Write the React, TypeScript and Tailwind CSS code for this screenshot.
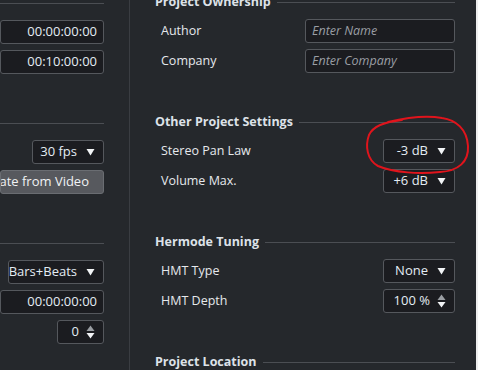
import React from "react";

const font = { fontFamily: '"Open Sans", "Noto Sans", sans-serif' };

function Caret() {
  return (
    <svg width="9" height="8" viewBox="0 0 9 8" className="shrink-0">
      <path d="M0.5 1 H8.5 L4.5 7.5 Z" fill="#f2f4f6" />
    </svg>
  );
}

function Spin() {
  return (
    <svg width="9" height="14" viewBox="0 0 9 14" className="shrink-0">
      <path d="M0.5 6 H8.5 L4.5 0.5 Z" fill="#9a9ea3" />
      <path d="M0.5 8 H8.5 L4.5 13.5 Z" fill="#f2f4f6" />
    </svg>
  );
}

function Field({ value, w }: { value: string; w: string }) {
  return (
    <div
      className={`${w} h-[24px] rounded-[3px] border border-[#55585d] bg-[#1b1c20] flex items-center justify-end pr-[6px] text-[13px] text-[#e4ecf4]`}
    >
      {value}
    </div>
  );
}

function Select({ value, w }: { value: string; w: string }) {
  return (
    <div
      className={`${w} h-[24px] rounded-[3px] border border-[#55585d] bg-[#1b1c20] flex items-center justify-end gap-[9px] pr-[8px] text-[13px] text-[#e4ecf4]`}
    >
      <span>{value}</span>
      <Caret />
    </div>
  );
}

function Spinner({ value, w }: { value: string; w: string }) {
  return (
    <div
      className={`${w} h-[24px] rounded-[3px] border border-[#55585d] bg-[#1b1c20] flex items-center justify-end gap-[7px] pr-[8px] text-[13px] text-[#e4ecf4]`}
    >
      <span>{value}</span>
      <Spin />
    </div>
  );
}

function TextInput({ placeholder }: { placeholder: string }) {
  return (
    <div className="w-[150px] h-[24px] rounded-[3px] border border-[#55585d] bg-[#1b1c20] flex items-center pl-[6px] text-[12.5px] italic text-[#9a9ea4]">
      {placeholder}
    </div>
  );
}

function Heading({ title }: { title?: string }) {
  return (
    <div className="h-[20px] flex items-center gap-[6px]">
      {title && (
        <span className="text-[12.5px] font-bold text-[#dde2e8] whitespace-nowrap">
          {title}
        </span>
      )}
      <div className="flex-1 h-px bg-[#4b4e53]" />
    </div>
  );
}

function Row({ label, children }: { label: string; children: React.ReactNode }) {
  return (
    <div className="h-[24px] flex items-center justify-between pl-[6px]">
      <span className="text-[12.5px] text-[#e6e9ec]">{label}</span>
      {children}
    </div>
  );
}

function Section({ title, children }: { title?: string; children?: React.ReactNode }) {
  return (
    <div className="h-[120px] shrink-0 flex flex-col">
      <Heading title={title} />
      <div className="mt-[7px] flex flex-col gap-[6px]">{children}</div>
    </div>
  );
}

export default function App() {
  return (
    <div
      className="relative w-[478px] h-[370px] overflow-hidden flex bg-[#25282c]"
      style={font}
    >
      <div className="w-[130px] shrink-0 border-r border-[#3a3d42] pr-[25px] -mt-[7px]">
        <Section>
          <div className="flex justify-end"><Field value="00:00:00:00" w="w-[130px]" /></div>
          <div className="flex justify-end"><Field value="00:10:00:00" w="w-[130px]" /></div>
        </Section>
        <Section>
          <div className="flex justify-end"><Select value="30 fps" w="w-[72px]" /></div>
          <div className="flex justify-end">
            <div className="w-[130px] h-[24px] rounded-[3px] border border-[#6a6d72] bg-[#57595e] flex items-center justify-end pr-[14px] text-[13px] text-[#f0f2f4] whitespace-nowrap overflow-hidden">
              Update from Video
            </div>
          </div>
        </Section>
        <Section>
          <div className="flex justify-end"><Select value="Bars+Beats" w="w-[96px]" /></div>
          <div className="flex justify-end"><Field value="00:00:00:00" w="w-[130px]" /></div>
          <div className="flex justify-end"><Spinner value="0" w="w-[47px]" /></div>
        </Section>
      </div>
      <div className="flex-1 pl-[25px] pr-[21px] -mt-[8px]">
        <Section title="Project Ownership">
          <Row label="Author"><TextInput placeholder="Enter Name" /></Row>
          <Row label="Company"><TextInput placeholder="Enter Company" /></Row>
        </Section>
        <Section title="Other Project Settings">
          <Row label="Stereo Pan Law"><Select value="-3 dB" w="w-[72px]" /></Row>
          <Row label="Volume Max."><Select value="+6 dB" w="w-[72px]" /></Row>
        </Section>
        <Section title="Hermode Tuning">
          <Row label="HMT Type"><Select value="None" w="w-[72px]" /></Row>
          <Row label="HMT Depth"><Spinner value="100 %" w="w-[72px]" /></Row>
        </Section>
        <Section title="Project Location" />
      </div>
      <div className="w-[2px] shrink-0 bg-[#eeeeee]" />
      <svg
        className="absolute inset-0 pointer-events-none"
        width="478"
        height="370"
        viewBox="0 0 478 370"
      >
        <path
          d="M388 122 C405 118 425 115 442 118 C456 120 467 129 468 146 C469 162 458 171 440 172 C420 174 394 173 378 166 C367 160 365 146 369 135 C373 126 384 122 402 120"
          fill="none"
          stroke="#e0141c"
          strokeWidth="2"
          strokeLinecap="round"
        />
      </svg>
    </div>
  );
}
